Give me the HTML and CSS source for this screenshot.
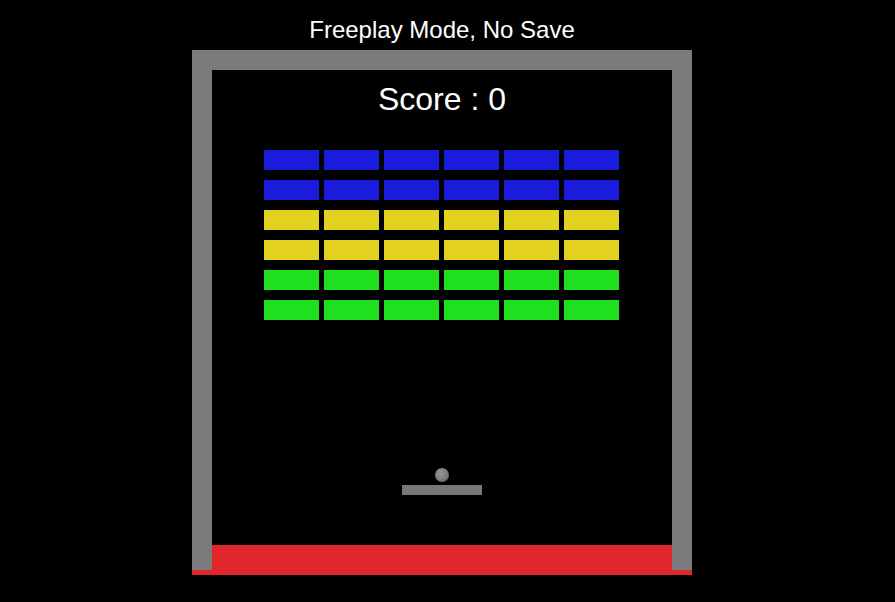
FILE: index.html
```html
<!DOCTYPE html>
<html>
<head>
<meta charset="utf-8">
<link rel="stylesheet" href="styles.css">
</head>
<body>
<div class="wrap">
  <div class="title">Freeplay Mode, No Save</div>
  <div class="frame">
    <div class="field">
      <div class="score">Score : 0</div>
      <div class="bricks">
        <div class="brick blue"></div><div class="brick blue"></div><div class="brick blue"></div><div class="brick blue"></div><div class="brick blue"></div><div class="brick blue"></div>
        <div class="brick blue"></div><div class="brick blue"></div><div class="brick blue"></div><div class="brick blue"></div><div class="brick blue"></div><div class="brick blue"></div>
        <div class="brick yellow"></div><div class="brick yellow"></div><div class="brick yellow"></div><div class="brick yellow"></div><div class="brick yellow"></div><div class="brick yellow"></div>
        <div class="brick yellow"></div><div class="brick yellow"></div><div class="brick yellow"></div><div class="brick yellow"></div><div class="brick yellow"></div><div class="brick yellow"></div>
        <div class="brick green"></div><div class="brick green"></div><div class="brick green"></div><div class="brick green"></div><div class="brick green"></div><div class="brick green"></div>
        <div class="brick green"></div><div class="brick green"></div><div class="brick green"></div><div class="brick green"></div><div class="brick green"></div><div class="brick green"></div>
      </div>
      <div class="ball"></div>
      <div class="paddle"></div>
      <div class="deadzone"></div>
    </div>
  </div>
  <div class="floor"></div>
</div>
</body>
</html>
```
FILE: styles.css
```css
html, body {
  margin: 0;
  padding: 0;
  background: #000;
}
body {
  font-family: "Liberation Sans", Arial, sans-serif;
  color: #fff;
}
.wrap {
  width: 500px;
  margin-left: 192px;
}
.title {
  padding-top: 18px;
  height: 32px;
  line-height: 24px;
  font-size: 24px;
  text-align: center;
}
.frame {
  border: 20px solid #7b7b7b;
  border-bottom: 0;
}
.field {
  position: relative;
  height: 500px;
  background: #000;
  display: flex;
  flex-direction: column;
}
.score {
  padding-top: 13px;
  font-size: 32px;
  line-height: 32px;
  text-align: center;
}
.bricks {
  margin-top: 35px;
  margin-left: 52px;
  display: grid;
  grid-template-columns: repeat(6, 55px);
  grid-auto-rows: 20px;
  column-gap: 5px;
  row-gap: 10px;
}
.blue { background: #1b1bdc; }
.yellow { background: #e2d21f; }
.green { background: #1ee01e; }
.ball {
  position: absolute;
  left: 223px;
  top: 398px;
  width: 14px;
  height: 14px;
  border-radius: 50%;
  background: radial-gradient(circle at 40% 40%, #9a9a9a 0%, #7a7a7a 55%, #555 100%);
}
.paddle {
  position: absolute;
  left: 190px;
  top: 415px;
  width: 80px;
  height: 10px;
  background: #777;
}
.deadzone {
  margin-top: auto;
  height: 25px;
  background: #e0262a;
}
.floor {
  height: 5px;
  background: #e0262a;
}
```
